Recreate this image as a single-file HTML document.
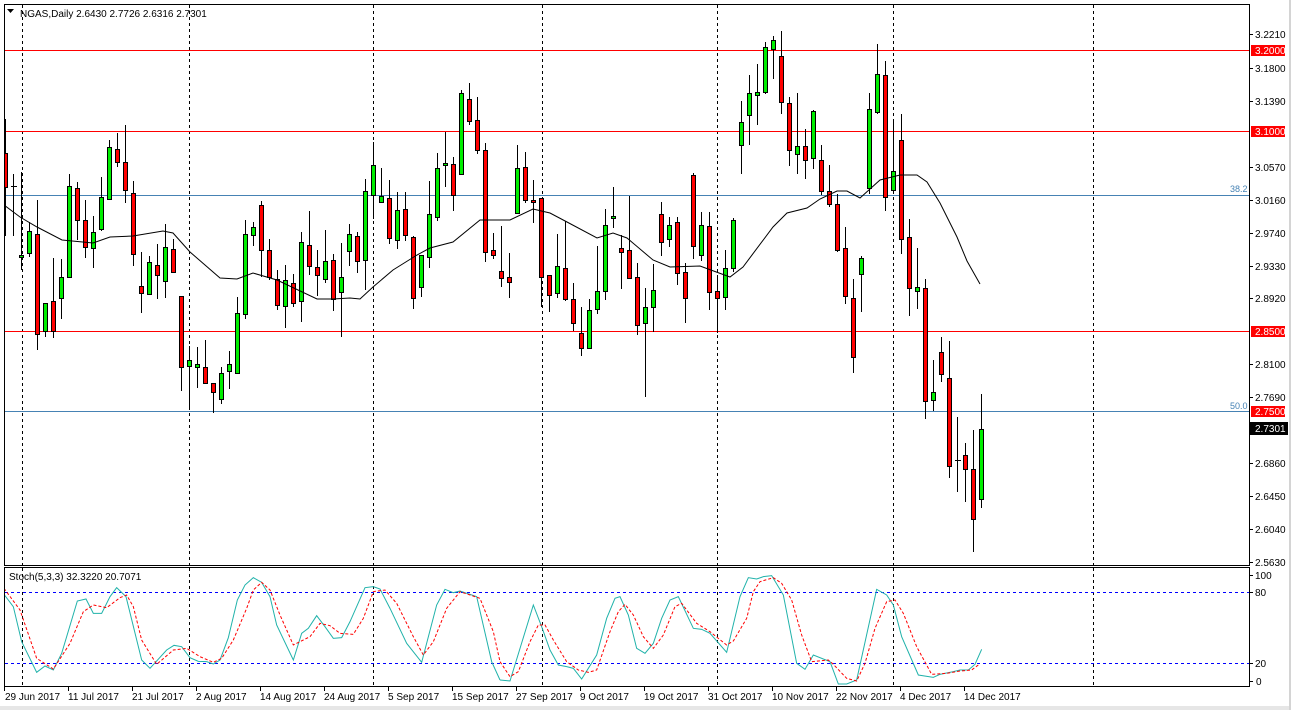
<!DOCTYPE html>
<html><head><meta charset="utf-8"><style>
html,body{margin:0;padding:0;background:#fff;width:1291px;height:710px;overflow:hidden}
svg{display:block;font-family:"Liberation Sans",sans-serif}
rect.g{fill:#00ee00;stroke:#000;stroke-width:1;width:4px}
rect.r{fill:#ff0000;stroke:#000;stroke-width:1;width:4px}
text{font-size:10px;fill:#000}
</style></head><body>
<svg width="1291" height="710" viewBox="0 0 1291 710" xmlns="http://www.w3.org/2000/svg">
<defs>
<clipPath id="cm"><rect x="5" y="5" width="1244" height="559"/></clipPath>
<clipPath id="cs"><rect x="5" y="567" width="1244" height="119"/></clipPath>
</defs>
<rect x="0" y="0" width="1291" height="710" fill="#fff"/>
<rect x="0" y="706" width="1291" height="4" fill="#e6e6e6"/>
<rect x="1289" y="0" width="2" height="710" fill="#d4d4d4"/>
<!-- panels -->
<rect x="4.5" y="4.5" width="1245" height="561" fill="none" stroke="#000"/>
<rect x="4.5" y="567.5" width="1245" height="119" fill="none" stroke="#000"/>
<!-- vertical grid -->
<g stroke="#000" stroke-dasharray="3 3" shape-rendering="crispEdges">
<path d="M22.5 5V565M189.5 5V565M373.5 5V565M542.5 5V565M717.5 5V565M893.5 5V565M1093.5 5V565"/>
<path d="M22.5 568V686M189.5 568V686M373.5 568V686M542.5 568V686M717.5 568V686M893.5 568V686M1093.5 568V686"/>
</g>
<!-- horizontal levels -->
<g shape-rendering="crispEdges">
<path d="M5 50.5H1249M5 131.5H1249M5 331.5H1249" stroke="#ff0000"/>
<path d="M5 195.5H1249M5 411.5H1249" stroke="#4682b4"/>
</g>
<text x="1230" y="192" style="fill:#4682b4;font-size:9px">38.2</text>
<text x="1230" y="409" style="fill:#4682b4;font-size:9px">50.0</text>
<!-- candles -->
<g clip-path="url(#cm)" shape-rendering="crispEdges">
<path stroke="#000" fill="none" d="M5.5 119V236M13.5 174V236M21.5 172V270M29.5 222V257M37.5 200V350M45.5 303V337M53.5 258V338M61.5 259V319M69.5 174V278M77.5 182V240M85.5 200V258M93.5 216V268M101.5 177V231M109.5 140V200M117.5 133V167M125.5 125V203M133.5 181V266M141.5 252V313M149.5 256V294M157.5 244V299M165.5 224V298M173.5 239V273M181.5 296V391M189.5 346V408M197.5 347V388M205.5 340V384M213.5 383V413M221.5 367V404M229.5 351V389M237.5 297V373M245.5 220V319M253.5 222V246M261.5 201V277M269.5 239V280M277.5 270V310M285.5 265V328M293.5 274V307M301.5 232V322M309.5 211V275M317.5 250V296M325.5 230V283M333.5 254V311M341.5 243V337M349.5 224V266M357.5 232V273M365.5 179V290M373.5 142V219M381.5 168V202M389.5 180V244M397.5 192V249M405.5 192V241M413.5 236V309M421.5 255V297M429.5 181V268M437.5 153V221M445.5 132V187M453.5 157V211M461.5 90V174M469.5 83V125M477.5 97V154M485.5 143V262M493.5 233V259M501.5 226V287M509.5 253V298M517.5 145V213M525.5 152V203M533.5 180V223M541.5 198V307M549.5 275V312M557.5 234V298M565.5 221V301M573.5 283V331M581.5 307V356M589.5 299V348M597.5 246V314M605.5 209V300M613.5 187V228M621.5 235V289M629.5 196V279M637.5 263V335M645.5 288V397M653.5 264V332M661.5 202V256M669.5 217V247M677.5 217V285M685.5 263V323M693.5 173V259M701.5 212V261M709.5 212V310M717.5 275V333M725.5 250V310M733.5 218V272M741.5 101V174M749.5 75V145M757.5 64V125M765.5 42V94M773.5 36V79M781.5 31V114M789.5 97V166M797.5 93V174M805.5 129V179M813.5 110V169M821.5 145V195M829.5 165V207M837.5 194V252M845.5 227V304M853.5 279V373M861.5 256V312M869.5 93V194M877.5 44V114M885.5 61V211M893.5 122V192M901.5 114V254M909.5 219V316M917.5 248V309M925.5 279V419M933.5 360V411M941.5 337V382M949.5 341V478M957.5 417V492M965.5 443V502M973.5 430V552M981.5 394V508M11 186.5h6M955 460.5h6"/>
<rect class="r" x="3.5" y="153.5" height="34"/>
<rect class="g" x="19.5" y="255.5" height="2"/>
<rect class="g" x="27.5" y="231.5" height="22"/>
<rect class="r" x="35.5" y="234.5" height="100"/>
<rect class="g" x="43.5" y="303.5" height="28"/>
<rect class="r" x="51.5" y="301.5" height="30"/>
<rect class="g" x="59.5" y="277.5" height="21"/>
<rect class="g" x="67.5" y="186.5" height="91"/>
<rect class="r" x="75.5" y="188.5" height="32"/>
<rect class="r" x="83.5" y="220.5" height="27"/>
<rect class="g" x="91.5" y="232.5" height="16"/>
<rect class="g" x="99.5" y="197.5" height="32"/>
<rect class="g" x="107.5" y="147.5" height="52"/>
<rect class="r" x="115.5" y="149.5" height="13"/>
<rect class="r" x="123.5" y="162.5" height="28"/>
<rect class="r" x="131.5" y="193.5" height="61"/>
<rect class="r" x="139.5" y="286.5" height="7"/>
<rect class="g" x="147.5" y="262.5" height="32"/>
<rect class="r" x="155.5" y="265.5" height="10"/>
<rect class="g" x="163.5" y="247.5" height="34"/>
<rect class="r" x="171.5" y="249.5" height="23"/>
<rect class="r" x="179.5" y="296.5" height="71"/>
<rect class="g" x="187.5" y="360.5" height="6"/>
<rect class="g" x="195.5" y="364.5" height="3"/>
<rect class="r" x="203.5" y="367.5" height="16"/>
<rect class="r" x="211.5" y="383.5" height="9"/>
<rect class="g" x="219.5" y="373.5" height="26"/>
<rect class="g" x="227.5" y="364.5" height="7"/>
<rect class="g" x="235.5" y="313.5" height="60"/>
<rect class="g" x="243.5" y="234.5" height="80"/>
<rect class="g" x="251.5" y="227.5" height="8"/>
<rect class="r" x="259.5" y="205.5" height="45"/>
<rect class="r" x="267.5" y="250.5" height="27"/>
<rect class="r" x="275.5" y="279.5" height="26"/>
<rect class="g" x="283.5" y="280.5" height="26"/>
<rect class="r" x="291.5" y="283.5" height="20"/>
<rect class="g" x="299.5" y="242.5" height="59"/>
<rect class="r" x="307.5" y="245.5" height="21"/>
<rect class="r" x="315.5" y="267.5" height="8"/>
<rect class="g" x="323.5" y="261.5" height="18"/>
<rect class="r" x="331.5" y="260.5" height="39"/>
<rect class="g" x="339.5" y="277.5" height="15"/>
<rect class="g" x="347.5" y="234.5" height="17"/>
<rect class="r" x="355.5" y="236.5" height="25"/>
<rect class="g" x="363.5" y="191.5" height="69"/>
<rect class="g" x="371.5" y="165.5" height="30"/>
<rect class="g" x="379.5" y="196.5" height="6"/>
<rect class="r" x="387.5" y="198.5" height="40"/>
<rect class="g" x="395.5" y="210.5" height="30"/>
<rect class="r" x="403.5" y="209.5" height="26"/>
<rect class="r" x="411.5" y="237.5" height="61"/>
<rect class="g" x="419.5" y="255.5" height="32"/>
<rect class="g" x="427.5" y="214.5" height="43"/>
<rect class="g" x="435.5" y="168.5" height="49"/>
<rect class="g" x="443.5" y="163.5" height="2"/>
<rect class="r" x="451.5" y="164.5" height="31"/>
<rect class="g" x="459.5" y="93.5" height="81"/>
<rect class="r" x="467.5" y="99.5" height="22"/>
<rect class="r" x="475.5" y="120.5" height="30"/>
<rect class="r" x="483.5" y="150.5" height="102"/>
<rect class="r" x="491.5" y="250.5" height="5"/>
<rect class="r" x="499.5" y="271.5" height="7"/>
<rect class="r" x="507.5" y="277.5" height="5"/>
<rect class="g" x="515.5" y="168.5" height="45"/>
<rect class="r" x="523.5" y="167.5" height="33"/>
<rect class="r" x="531.5" y="200.5" height="2"/>
<rect class="r" x="539.5" y="198.5" height="79"/>
<rect class="r" x="547.5" y="275.5" height="20"/>
<rect class="g" x="555.5" y="266.5" height="27"/>
<rect class="r" x="563.5" y="268.5" height="31"/>
<rect class="r" x="571.5" y="299.5" height="24"/>
<rect class="r" x="579.5" y="333.5" height="15"/>
<rect class="g" x="587.5" y="310.5" height="38"/>
<rect class="g" x="595.5" y="291.5" height="18"/>
<rect class="g" x="603.5" y="225.5" height="66"/>
<rect class="g" x="611.5" y="216.5" height="2"/>
<rect class="r" x="619.5" y="248.5" height="4"/>
<rect class="r" x="627.5" y="250.5" height="28"/>
<rect class="r" x="635.5" y="277.5" height="48"/>
<rect class="g" x="643.5" y="307.5" height="16"/>
<rect class="g" x="651.5" y="290.5" height="17"/>
<rect class="r" x="659.5" y="214.5" height="28"/>
<rect class="g" x="667.5" y="225.5" height="14"/>
<rect class="r" x="675.5" y="222.5" height="51"/>
<rect class="r" x="683.5" y="272.5" height="26"/>
<rect class="r" x="691.5" y="175.5" height="71"/>
<rect class="g" x="699.5" y="225.5" height="30"/>
<rect class="r" x="707.5" y="226.5" height="66"/>
<rect class="r" x="715.5" y="291.5" height="7"/>
<rect class="g" x="723.5" y="268.5" height="29"/>
<rect class="g" x="731.5" y="220.5" height="48"/>
<rect class="g" x="739.5" y="122.5" height="23"/>
<rect class="g" x="747.5" y="93.5" height="22"/>
<rect class="g" x="755.5" y="92.5" height="3"/>
<rect class="g" x="763.5" y="47.5" height="45"/>
<rect class="g" x="771.5" y="40.5" height="9"/>
<rect class="r" x="779.5" y="56.5" height="46"/>
<rect class="r" x="787.5" y="103.5" height="47"/>
<rect class="g" x="795.5" y="146.5" height="8"/>
<rect class="r" x="803.5" y="146.5" height="14"/>
<rect class="g" x="811.5" y="111.5" height="47"/>
<rect class="r" x="819.5" y="160.5" height="31"/>
<rect class="r" x="827.5" y="191.5" height="13"/>
<rect class="r" x="835.5" y="204.5" height="46"/>
<rect class="r" x="843.5" y="248.5" height="48"/>
<rect class="r" x="851.5" y="298.5" height="59"/>
<rect class="g" x="859.5" y="258.5" height="16"/>
<rect class="g" x="867.5" y="109.5" height="79"/>
<rect class="g" x="875.5" y="74.5" height="38"/>
<rect class="r" x="883.5" y="75.5" height="122"/>
<rect class="g" x="891.5" y="171.5" height="19"/>
<rect class="r" x="899.5" y="140.5" height="99"/>
<rect class="r" x="907.5" y="237.5" height="51"/>
<rect class="g" x="915.5" y="287.5" height="4"/>
<rect class="r" x="923.5" y="288.5" height="113"/>
<rect class="g" x="931.5" y="392.5" height="8"/>
<rect class="r" x="939.5" y="352.5" height="22"/>
<rect class="r" x="947.5" y="378.5" height="88"/>
<rect class="r" x="963.5" y="455.5" height="14"/>
<rect class="r" x="971.5" y="469.5" height="50"/>
<rect class="g" x="979.5" y="429.5" height="70"/>
</g>
<!-- MA -->
<polyline clip-path="url(#cm)" fill="none" stroke="#000" stroke-width="1" points="4,205 20,217 37,227 62,240 93,243 110,237 133,236 163,231 173,233 190,252 220,278 237,279 253,273 277,280 317,299 333,299 350,298 360,299 373,287 393,270 417,255 430,248 453,242 480,220 510,220 533,209 550,213 567,222 597,238 613,233 627,238 653,260 670,267 700,266 730,277 743,267 773,227 787,213 807,208 820,199 837,191 847,191 860,198 870,189 880,180 900,175 917,175 927,182 940,203 957,237 967,261 980,284"/>
<!-- header -->
<path d="M7 9h7l-3.5 4z" fill="#000"/>
<text x="20" y="17">NGAS,Daily  2.6430 2.7726 2.6316 2.7301</text>
<!-- stoch -->
<g shape-rendering="crispEdges" stroke="#0000ff" stroke-dasharray="3 3">
<path d="M5 592.5H1249M5 663.5H1249"/>
</g>
<text x="9" y="580" style="font-size:10px">Stoch(5,3,3) 32.3220 20.7071</text>
<g clip-path="url(#cs)">
<g transform="translate(0,565) scale(0.3333333)">
<polyline fill="none" stroke="#20b2aa" stroke-width="3" points="12,88 40,125 65,230 110,322 135,303 160,315 185,265 232,108 258,102 280,145 305,145 330,95 350,68 378,95 425,285 450,310 500,255 522,241 545,245 570,278 595,289 620,290 640,297 660,285 685,218 712,105 735,60 760,38 785,52 810,95 830,180 880,285 905,205 925,190 950,152 975,185 1000,220 1025,218 1050,170 1095,68 1120,65 1140,72 1170,130 1220,235 1265,292 1310,120 1335,73 1360,83 1380,78 1430,95 1475,290 1500,345"/>
<polyline fill="none" stroke="#ff0000" stroke-width="3" stroke-dasharray="9 6" points="12,70 60,135 110,280 160,312 210,235 250,140 280,120 320,128 360,98 380,90 400,125 425,225 470,298 520,255 560,250 600,275 640,292 665,280 700,225 740,130 760,75 785,52 810,75 840,150 880,240 930,215 960,175 990,182 1020,205 1060,208 1090,160 1120,80 1155,75 1190,115 1240,215 1270,270 1300,230 1340,130 1380,80 1440,100 1480,200 1500,290"/>
</g>
<g transform="translate(500,565) scale(0.3333333)">
<polyline fill="none" stroke="#20b2aa" stroke-width="3" points="0,345 30,348 100,120 125,185 150,255 175,300 200,305 220,310 245,342 290,270 320,160 345,100 360,95 385,150 410,250 435,265 460,235 485,160 510,105 535,95 580,190 605,193 630,205 680,262 720,95 745,38 770,42 790,35 815,32 850,90 890,295 915,313 940,270 990,290 1015,357 1040,357 1070,345 1130,73 1160,90 1180,120 1205,215 1255,330 1300,337 1320,328 1360,320 1380,315 1405,315 1425,298 1445,253"/>
<polyline fill="none" stroke="#ff0000" stroke-width="3" stroke-dasharray="9 6" points="0,290 30,335 55,320 90,230 115,180 135,180 160,225 200,290 235,315 265,322 290,315 330,200 355,140 375,118 400,150 430,215 460,250 490,210 525,125 545,115 590,175 630,200 680,240 700,228 740,160 760,80 780,50 820,38 845,55 875,105 905,210 935,290 985,285 1000,298 1040,340 1070,348 1095,295 1125,190 1160,110 1185,105 1210,145 1250,245 1295,328 1340,325 1380,318 1415,315 1435,300"/>
</g>
</g>
<!-- price axis -->
<g stroke="#000" shape-rendering="crispEdges">
<path d="M1250 34.5h3M1250 68.5h3M1250 101.5h3M1250 167.5h3M1250 200.5h3M1250 233.5h3M1250 266.5h3M1250 298.5h3M1250 364.5h3M1250 397.5h3M1250 463.5h3M1250 496.5h3M1250 529.5h3M1250 562.5h3M1250 575.5h3M1250 592.5h3M1250 663.5h3M1250 681.5h3"/>
</g>
<g>
<text x="1255" y="38">3.2210</text>
<text x="1255" y="72">3.1800</text>
<text x="1255" y="105">3.1390</text>
<text x="1255" y="171">3.0570</text>
<text x="1255" y="204">3.0160</text>
<text x="1255" y="237">2.9740</text>
<text x="1255" y="270">2.9330</text>
<text x="1255" y="302">2.8920</text>
<text x="1255" y="368">2.8100</text>
<text x="1255" y="401">2.7690</text>
<text x="1255" y="467">2.6860</text>
<text x="1255" y="500">2.6450</text>
<text x="1255" y="533">2.6040</text>
<text x="1255" y="566">2.5630</text>
<rect x="1251" y="45" width="34" height="11" fill="#ff0000"/>
<text x="1255" y="54" style="fill:#fff">3.2000</text>
<rect x="1251" y="126" width="34" height="11" fill="#ff0000"/>
<text x="1255" y="135" style="fill:#fff">3.1000</text>
<rect x="1251" y="326" width="34" height="11" fill="#ff0000"/>
<text x="1255" y="335" style="fill:#fff">2.8500</text>
<rect x="1251" y="406" width="34" height="11" fill="#ff0000"/>
<text x="1255" y="415" style="fill:#fff">2.7500</text>
<rect x="1250" y="422" width="38" height="13" fill="#000"/>
<text x="1255" y="432" style="fill:#fff">2.7301</text>
<text x="1255" y="579">100</text>
<text x="1255" y="596">80</text>
<text x="1255" y="667">20</text>
<text x="1256" y="685">0</text>
</g>
<!-- date axis -->
<g stroke="#000" shape-rendering="crispEdges"><path d="M4.5 687v4M68.5 687v4M132.5 687v4M196.5 687v4M260.5 687v4M324.5 687v4M388.5 687v4M452.5 687v4M516.5 687v4M580.5 687v4M644.5 687v4M708.5 687v4M772.5 687v4M836.5 687v4M900.5 687v4M964.5 687v4"/></g>
<g>
<text x="5" y="700">29 Jun 2017</text>
<text x="68" y="700">11 Jul 2017</text>
<text x="132" y="700">21 Jul 2017</text>
<text x="196" y="700">2 Aug 2017</text>
<text x="260" y="700">14 Aug 2017</text>
<text x="324" y="700">24 Aug 2017</text>
<text x="388" y="700">5 Sep 2017</text>
<text x="452" y="700">15 Sep 2017</text>
<text x="516" y="700">27 Sep 2017</text>
<text x="580" y="700">9 Oct 2017</text>
<text x="644" y="700">19 Oct 2017</text>
<text x="708" y="700">31 Oct 2017</text>
<text x="772" y="700">10 Nov 2017</text>
<text x="836" y="700">22 Nov 2017</text>
<text x="900" y="700">4 Dec 2017</text>
<text x="964" y="700">14 Dec 2017</text>
</g>
</svg>
</body></html>
